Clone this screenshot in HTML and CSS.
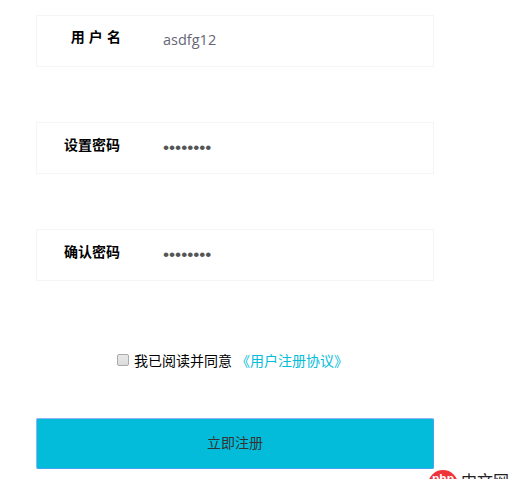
FILE: index.html
```html
<!DOCTYPE html>
<html lang="zh-CN">
<head>
    <meta charset="UTF-8">
    <meta name="viewport" content="width=device-width, initial-scale=1.0">
    <title>用户注册</title>
    <link rel="stylesheet" href="styles.css">
</head>
<body>
    <form class="register">
        <div class="field">
            <label class="field-label spaced">用 户 名</label>
            <input class="field-input" type="text" value="asdfg12">
        </div>
        <div class="field">
            <label class="field-label">设置密码</label>
            <input class="field-input" type="password" value="12345678">
        </div>
        <div class="field">
            <label class="field-label">确认密码</label>
            <input class="field-input" type="password" value="12345678">
        </div>
        <div class="agree">
            <input class="agree-check" type="checkbox">
            <span>我已阅读并同意</span>
            <a class="agree-link" href="#">《用户注册协议》</a>
        </div>
        <button class="submit" type="button">立即注册</button>
    </form>

    <div class="watermark">
        <span class="watermark-badge">php</span>
        <span class="watermark-text">中文网</span>
    </div>
</body>
</html>
```

FILE: styles.css
```css
:root {
    --line-color: #f5f5f5;
    --accent-color: #02bcd9;
    --input-color: #667;
}
html, body {
    height: 100%;
}
body {
    margin: 0;
    overflow: hidden;
    position: relative;
    background-color: #fff;
    font-family: "Noto Sans CJK SC", "Liberation Sans", sans-serif;
    font-size: 14px;
    color: #000;
}

.register {
    width: 398px;
    margin-left: 36px;
    padding-top: 15px;
    display: flex;
    flex-direction: column;
}

.field {
    height: 52px;
    box-sizing: border-box;
    border: 1px solid var(--line-color);
    margin-bottom: 55px;
    display: flex;
    align-items: flex-start;
}
.field-label {
    width: 83px;
    margin-top: 10px;
    text-align: right;
    font-weight: bold;
    font-size: 14px;
    line-height: 22px;
}
.field-label.spaced {
    width: 84px;
    margin-top: 9px;
    margin-right: -1px;
    word-spacing: 1px;
}
.field-input {
    margin: 11px 0 0 43px;
    padding: 0;
    width: 240px;
    height: 24px;
    border: none;
    outline: none;
    font-family: "Open Sans", "Noto Sans", sans-serif;
    font-size: 14.5px;
    color: var(--input-color);
}
.field-input[type="password"] {
    font-family: "Liberation Sans", sans-serif;
    font-size: 17.3px;
    margin-top: 12px;
    color: #555;
}

.agree {
    margin-top: 13px;
    height: 22px;
    padding-right: 5px;
    display: flex;
    align-items: center;
    justify-content: center;
    gap: 4px;
    line-height: 22px;
}
.agree-check {
    appearance: none;
    box-sizing: border-box;
    width: 12px;
    height: 12px;
    margin: 0 1px 1px 0;
    border: 1px solid #aaa;
    border-radius: 2px;
    background: linear-gradient(#e8e8e8, #dcdcdc);
}
.agree-link {
    color: var(--accent-color);
    text-decoration: none;
}

.submit {
    height: 51px;
    margin-top: 47px;
    padding: 0 0 4px;
    width: 398px;
    box-sizing: border-box;
    background-color: var(--accent-color);
    border: 1px solid;
    border-color: #8fb4f5 #3fa5ee #3fa5ee #8fb4f5;
    border-radius: 2px;
    font-family: "Noto Sans CJK SC", sans-serif;
    font-size: 14px;
    color: #333;
}

/* site watermark over the corner */
.watermark {
    position: absolute;
    left: 428px;
    top: 470px;
    display: flex;
    align-items: flex-start;
    gap: 3px;
}
.watermark-badge {
    width: 30px;
    height: 20px;
    border-radius: 15px 15px 0 0;
    background-color: #f0333a;
    color: #fff;
    font-family: "Liberation Sans", sans-serif;
    font-size: 12px;
    font-weight: bold;
    line-height: 18px;
    text-align: center;
}
.watermark-text {
    font-size: 16px;
    line-height: 20px;
    color: #222;
}
```
